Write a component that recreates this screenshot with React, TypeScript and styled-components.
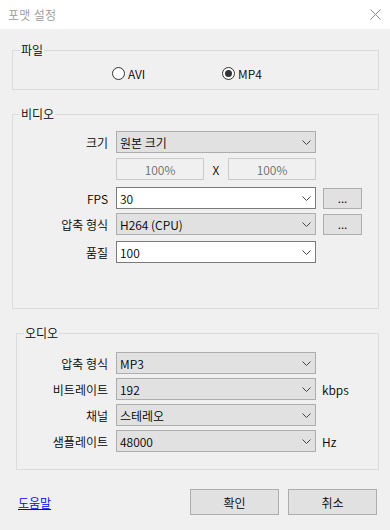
import styled, { createGlobalStyle } from 'styled-components'

const GlobalStyle = createGlobalStyle`
  html, body {
    margin: 0;
    padding: 0;
    background: #f0f0f0;
  }
  body {
    font-family: "Noto Sans CJK KR", "Noto Sans", sans-serif;
    font-size: 12px;
    font-weight: 350;
    color: #000;
  }
`

function Chevron() {
    return (
        <svg width="9" height="5" viewBox="0 0 9 5">
            <polyline points="0.5,0.5 4.5,4.5 8.5,0.5" fill="none" stroke="#444" strokeWidth="1" />
        </svg>
    )
}

function CloseIcon() {
    return (
        <svg width="11" height="11" viewBox="0 0 11 11">
            <line x1="0.5" y1="0.5" x2="10.5" y2="10.5" stroke="#8a8a8a" strokeWidth="1" />
            <line x1="10.5" y1="0.5" x2="0.5" y2="10.5" stroke="#8a8a8a" strokeWidth="1" />
        </svg>
    )
}

interface SelectProps {
    value: string
    white?: boolean
}

function Select({ value, white }: SelectProps) {
    return (
        <SelectBox $white={white}>
            <span>{value}</span>
            <Chevron />
        </SelectBox>
    )
}

function Radio({ label, checked }: { label: string, checked?: boolean }) {
    return (
        <RadioItem>
            <RadioCircle>{checked && <RadioDot />}</RadioCircle>
            <span>{label}</span>
        </RadioItem>
    )
}

export default function App() {
    return (
        <>
            <GlobalStyle />
            <Dialog>
                <TitleBar>
                    <Title>포맷 설정</Title>
                    <CloseButton><CloseIcon /></CloseButton>
                </TitleBar>
                <Body>
                    <Group $left={12} $pb={8}>
                        <Legend>파일</Legend>
                        <RadioRow>
                            <Radio label="AVI" />
                            <Radio label="MP4" checked />
                        </RadioRow>
                    </Group>

                    <Group $left={12} $pb={45} $mt={16}>
                        <Legend>비디오</Legend>
                        <Row $mt={9}>
                            <Label $w={103}>크기</Label>
                            <Select value="원본 크기" />
                        </Row>
                        <Row $mt={5}>
                            <Label $w={103} />
                            <PercentBox>100%</PercentBox>
                            <Times>X</Times>
                            <PercentBox>100%</PercentBox>
                        </Row>
                        <Row $mt={7}>
                            <Label $w={103}>FPS</Label>
                            <Select value="30" white />
                            <SmallButton>...</SmallButton>
                        </Row>
                        <Row $mt={4}>
                            <Label $w={103}>압축 형식</Label>
                            <Select value="H264 (CPU)" />
                            <SmallButton>...</SmallButton>
                        </Row>
                        <Row $mt={6}>
                            <Label $w={103}>품질</Label>
                            <Select value="100" white />
                        </Row>
                    </Group>

                    <Group $left={16} $pb={17} $mt={16}>
                        <Legend>오디오</Legend>
                        <Row $mt={11}>
                            <Label $w={99}>압축 형식</Label>
                            <Select value="MP3" />
                        </Row>
                        <Row $mt={4}>
                            <Label $w={99}>비트레이트</Label>
                            <Select value="192" />
                            <Unit>kbps</Unit>
                        </Row>
                        <Row $mt={4}>
                            <Label $w={99}>채널</Label>
                            <Select value="스테레오" />
                        </Row>
                        <Row $mt={4}>
                            <Label $w={99}>샘플레이트</Label>
                            <Select value="48000" />
                            <Unit>Hz</Unit>
                        </Row>
                    </Group>

                    <Footer>
                        <HelpLink href="#">도움말</HelpLink>
                        <Buttons>
                            <DialogButton>확인</DialogButton>
                            <DialogButton>취소</DialogButton>
                        </Buttons>
                    </Footer>
                </Body>
            </Dialog>
        </>
    )
}

const Dialog = styled.div`
    width: 390px;
    height: 530px;
    display: flex;
    flex-direction: column;
    background: #f0f0f0;
    overflow: hidden;
`

const TitleBar = styled.div`
    height: 29px;
    flex: none;
    display: flex;
    align-items: center;
    justify-content: space-between;
    background: #ffffff;
    padding: 0 9px 0 8px;
`

const Title = styled.span`
    font-size: 12px;
    color: #9a9a9a;
    letter-spacing: 0.3px;
`

const CloseButton = styled.div`
    display: flex;
    align-items: center;
    margin-top: -1px;
`

const Body = styled.div`
    padding-top: 13px;
    display: flex;
    flex-direction: column;
`

const Group = styled.fieldset<{ $left: number, $pb: number, $mt?: number }>`
    margin: ${({ $mt }) => $mt || 0}px 11px 0 ${({ $left }) => $left}px;
    padding: 0 0 ${({ $pb }) => $pb}px 0;
    border: 1px solid #dcdcdc;
    min-width: 0;
`

const Legend = styled.legend`
    margin-left: 7px;
    padding: 0 1px;
    font-size: 12px;
    line-height: 16px;
    color: #000;
`

const RadioRow = styled.div`
    display: flex;
    height: 16px;
    margin-top: 7px;
    padding-left: 99px;
`

const RadioItem = styled.div`
    width: 110px;
    display: flex;
    align-items: center;
    gap: 3px;
`

const RadioCircle = styled.span`
    width: 13px;
    height: 13px;
    box-sizing: border-box;
    border: 1px solid #333;
    border-radius: 50%;
    background: #fff;
    display: flex;
    align-items: center;
    justify-content: center;
`

const RadioDot = styled.span`
    width: 7px;
    height: 7px;
    border-radius: 50%;
    background: #333;
`

const Row = styled.div<{ $mt: number }>`
    display: flex;
    align-items: center;
    height: 22px;
    margin-top: ${({ $mt }) => $mt}px;
`

const Label = styled.span<{ $w: number }>`
    width: ${({ $w }) => $w}px;
    flex: none;
    box-sizing: border-box;
    padding-right: 8px;
    text-align: right;
`

const SelectBox = styled.div<{ $white?: boolean }>`
    width: 200px;
    height: 22px;
    flex: none;
    box-sizing: border-box;
    display: flex;
    align-items: center;
    justify-content: space-between;
    padding: 0 4px 0 3px;
    border: 1px solid ${({ $white }) => $white ? '#7a7a7a' : '#adadad'};
    background: ${({ $white }) => $white ? '#ffffff' : '#e1e1e1'};
`

const PercentBox = styled.div`
    width: 88px;
    height: 22px;
    box-sizing: border-box;
    display: flex;
    align-items: center;
    justify-content: center;
    border: 1px solid #cccccc;
    background: #f0f0f0;
    color: #6d6d6d;
`

const Times = styled.span`
    width: 24px;
    text-align: center;
`

const SmallButton = styled.div`
    width: 39px;
    height: 21px;
    box-sizing: border-box;
    margin-left: 7px;
    display: flex;
    align-items: center;
    justify-content: center;
    border: 1px solid #adadad;
    background: #e1e1e1;
    padding-bottom: 2px;
`

const Unit = styled.span`
    margin-left: 6px;
`

const Footer = styled.div`
    display: flex;
    align-items: center;
    justify-content: space-between;
    margin-top: 19px;
    padding: 0 13px 0 18px;
`

const HelpLink = styled.a`
    color: #0000ff;
    text-decoration: underline;
    font-size: 12px;
`

const Buttons = styled.div`
    display: flex;
    gap: 9px;
`

const DialogButton = styled.div`
    width: 89px;
    height: 26px;
    box-sizing: border-box;
    display: flex;
    align-items: center;
    justify-content: center;
    border: 1px solid #adadad;
    background: #e1e1e1;
`
